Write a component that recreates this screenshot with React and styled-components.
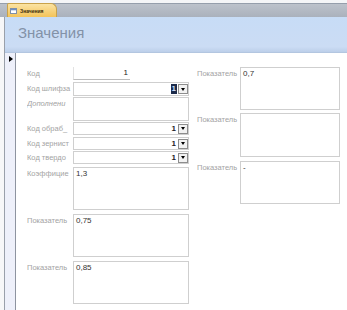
import React from "react";
import styled, { createGlobalStyle } from "styled-components";

const Global = createGlobalStyle`
  html, body { margin: 0; padding: 0; background: #fff; }
  body { font-family: "Liberation Sans", Arial, sans-serif; }
`;

const Page = styled.div`
  width: 347px;
  height: 310px;
  overflow: hidden;
  display: flex;
  flex-direction: column;
  background: #fff;
`;

const TopStrip = styled.div`
  height: 3px;
  background: #f4f5f7;
`;

const TabBar = styled.div`
  height: 14px;
  display: flex;
  padding-left: 7px;
  background: linear-gradient(#bcc2cb, #aab1bc);
  border-top: 1px solid #959eab;
  box-sizing: border-box;
`;

const Tab = styled.div`
  width: 50px;
  height: 14px;
  margin-top: -1px;
  display: flex;
  align-items: center;
  gap: 3px;
  padding-left: 2px;
  box-sizing: border-box;
  border: 1px solid #c9a24a;
  border-bottom: none;
  border-radius: 2px 6px 0 0;
  background: linear-gradient(#fbe3a2, #f3c35a);
  font-size: 5px;
  font-weight: bold;
  color: #3a2a08;
`;

const TabIcon = styled.svg`
  flex: none;
`;

const Main = styled.div`
  flex: 1;
  display: flex;
`;

const Gutter = styled.div`
  width: 4px;
  flex: none;
  background: #f7f7f8;
  border-right: 1px solid #9aa0aa;
`;

const Content = styled.div`
  flex: 1;
  display: flex;
  flex-direction: column;
`;

const Header = styled.div`
  height: 36px;
  box-sizing: border-box;
  padding: 7px 0 0 13px;
  background: linear-gradient(#c7dcf6, #cbdcf4 85%, #bccfe9);
  border-bottom: 1px solid #b3c6e0;
  font-size: 15px;
  color: #8392a8;
`;

const Detail = styled.div`
  flex: 1;
  display: flex;
`;

const Selector = styled.div`
  width: 10px;
  flex: none;
  background: #eef0fa;
  border-right: 1px solid #8e94a0;
  position: relative;
`;

const Arrow = styled.div`
  position: absolute;
  left: 4px;
  top: 3px;
  width: 0;
  height: 0;
  border-top: 3px solid transparent;
  border-bottom: 3px solid transparent;
  border-left: 4px solid #000;
`;

const Form = styled.div`
  display: flex;
  gap: 8px;
  padding: 14px 0 0 11px;
`;

const Column = styled.div`
  display: flex;
  flex-direction: column;
`;

const Row = styled.div`
  display: flex;
  margin-top: ${(p) => p.$gap || 0}px;
`;

const Label = styled.div`
  width: ${(p) => p.$w}px;
  flex: none;
  font-size: 7.5px;
  line-height: 10px;
  padding-top: 2px;
  color: #a3a3a3;
  white-space: nowrap;
  overflow: hidden;
  font-style: ${(p) => (p.$italic ? "italic" : "normal")};
`;

const Box = styled.div`
  width: ${(p) => p.$w}px;
  height: ${(p) => p.$h}px;
  box-sizing: border-box;
  border: 1px solid #cfcfcf;
  font-size: 8px;
  line-height: 10px;
  color: #333;
  padding: 1px 2px;
`;

const KeyBox = styled.div`
  width: 57px;
  height: 13px;
  box-sizing: border-box;
  border-left: 1px solid #e2e2e2;
  border-bottom: 1px solid #bdbdbd;
  font-size: 8px;
  line-height: 11px;
  color: #222;
  text-align: right;
  padding-right: 2px;
`;

const Combo = styled.div`
  width: 116px;
  height: ${(p) => p.$h}px;
  box-sizing: border-box;
  border: 1px solid #cfcfcf;
  display: flex;
  align-items: center;
  justify-content: flex-end;
  gap: 1px;
  font-size: 8px;
  color: #222;
`;

const ComboValue = styled.span`
  font-weight: bold;
  line-height: 10px;
  padding: 0 1px;
  background: ${(p) => (p.$selected ? "#1c2a4a" : "transparent")};
  color: ${(p) => (p.$selected ? "#cfe0ff" : "#222")};
`;

const DropButton = styled.div`
  width: 10px;
  height: 10px;
  box-sizing: border-box;
  border: 1px solid #8d8d8d;
  background: #f2f2f2;
  display: flex;
  align-items: center;
  justify-content: center;
  &::after {
    content: "";
    border-left: 2.5px solid transparent;
    border-right: 2.5px solid transparent;
    border-top: 3px solid #000;
  }
`;

const LeftLabelW = 46;
const RightLabelW = 43;

const ComboRow = ({ label, gap, h = 13, selected }) => (
  <Row $gap={gap}>
    <Label $w={LeftLabelW}>{label}</Label>
    <Combo $h={h}>
      <ComboValue $selected={selected}>1</ComboValue>
      <DropButton />
    </Combo>
  </Row>
);

const TextRow = ({ label, gap, h, w, labelW, value, italic }) => (
  <Row $gap={gap}>
    <Label $w={labelW} $italic={italic}>
      {label}
    </Label>
    <Box $w={w} $h={h}>
      {value}
    </Box>
  </Row>
);

export default function App() {
  return (
    <Page>
      <Global />
      <TopStrip />
      <TabBar>
        <Tab>
          <TabIcon width="7" height="6" viewBox="0 0 7 6">
            <rect x="0.5" y="0.5" width="6" height="5" fill="#fff" stroke="#7f8fa8" />
            <rect x="1" y="1" width="5" height="1.3" fill="#6d8fc4" />
          </TabIcon>
          Значения
        </Tab>
      </TabBar>
      <Main>
        <Gutter />
        <Content>
          <Header>Значения</Header>
          <Detail>
            <Selector>
              <Arrow />
            </Selector>
            <Form>
              <Column>
                <Row>
                  <Label $w={LeftLabelW}>Код</Label>
                  <KeyBox>1</KeyBox>
                </Row>
                <ComboRow label="Код шлифза" gap={2} h={14} selected />
                <TextRow label="Дополнени" gap={1} h={24} w={116} labelW={LeftLabelW} italic />
                <ComboRow label="Код обраб_" gap={1} />
                <ComboRow label="Код зернист" gap={2} />
                <ComboRow label="Код твердо" gap={1} />
                <TextRow label="Коэффицие" gap={3} h={43} w={116} labelW={LeftLabelW} value="1,3" />
                <TextRow label="Показатель" gap={4} h={43} w={116} labelW={LeftLabelW} value="0,75" />
                <TextRow label="Показатель" gap={4} h={43} w={116} labelW={LeftLabelW} value="0,85" />
              </Column>
              <Column>
                <TextRow label="Показатель" h={43} w={100} labelW={RightLabelW} value="0,7" />
                <TextRow label="Показатель" gap={3} h={44} w={100} labelW={RightLabelW} />
                <TextRow label="Показатель" gap={4} h={43} w={100} labelW={RightLabelW} value="-" />
              </Column>
            </Form>
          </Detail>
        </Content>
      </Main>
    </Page>
  );
}
